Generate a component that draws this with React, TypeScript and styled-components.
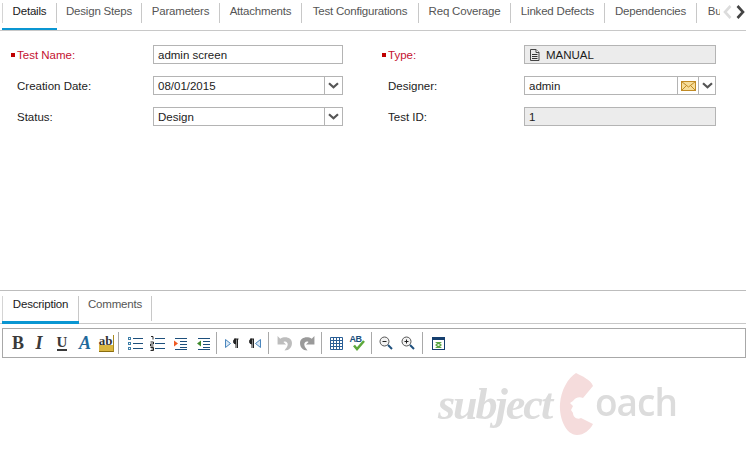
import React from "react";
import styled, { createGlobalStyle } from "styled-components";

const GlobalStyle = createGlobalStyle`
  html, body {
    margin: 0;
    padding: 0;
    background: #fff;
  }
  * {
    box-sizing: border-box;
  }
`;

const Page = styled.div`
  position: relative;
  width: 746px;
  height: 456px;
  overflow: hidden;
  display: flex;
  flex-direction: column;
  font-family: "Liberation Sans", Arial, sans-serif;
  font-size: 11.5px;
  color: #222;
  background: #fff;
`;

// Tab strips
const TopTabBar = styled.div`
  display: flex;
  height: 31px;
  padding: 3px 0 0 2px;
  border-bottom: 1px solid #c8c8c8;
`;

const TabScroller = styled.div`
  display: flex;
  width: 718px;
  overflow: hidden;
  flex: none;
`;

const Tab = styled.div<{ $width: number; $active?: boolean; $height: number }>`
  flex: none;
  width: ${(p) => p.$width}px;
  height: ${(p) => p.$height}px;
  border-bottom: 3px solid ${(p) => (p.$active ? "#0a96d2" : "transparent")};
  position: relative;
  z-index: 1;
`;

const TabLabel = styled.div<{ $active?: boolean; $first?: boolean; $height: number; $lift: number }>`
  height: ${(p) => p.$height}px;
  display: flex;
  justify-content: center;
  padding-bottom: ${(p) => p.$lift}px;
  align-items: center;
  white-space: nowrap;
  letter-spacing: -0.2px;
  color: ${(p) => (p.$active ? "#1a1a1a" : "#555")};
  border-right: 1px solid #c8c8c8;
  border-left: ${(p) => (p.$first ? "1px solid #d4d4d4" : "none")};
`;

const ScrollArrows = styled.div`
  flex: none;
  display: flex;
  align-items: center;
  height: 18px;
  margin-left: 3px;
  gap: 4px;
`;

// Form
const UpperPanel = styled.div`
  height: 259px;
  padding: 14px 0 0 11px;
`;

const FormGrid = styled.div`
  display: grid;
  grid-template-columns: 142px 190px 181px 192px;
  row-gap: 12px;
  grid-auto-rows: 19px;
`;

const FieldLabel = styled.div<{ $required?: boolean; $second?: boolean }>`
  display: flex;
  align-items: center;
  color: ${(p) => (p.$required ? "#c4122f" : "#222")};
  padding-left: ${(p) => (p.$required ? 0 : 6)}px;
  margin-left: ${(p) => (p.$second ? 39 : 0)}px;
`;

const RequiredMark = styled.span`
  width: 4px;
  height: 4px;
  background: #c00000;
  margin-right: 2px;
  flex: none;
`;

const Field = styled.div<{ $readOnly?: boolean }>`
  display: flex;
  align-items: stretch;
  height: 19px;
  border: 1px solid #b4b4b4;
  background: ${(p) => (p.$readOnly ? "#ececec" : "#fff")};
`;

const FieldValue = styled.div`
  flex: 1;
  display: flex;
  align-items: center;
  gap: 6px;
  padding-left: 4px;
  color: #1c1c1c;
`;

const FieldButton = styled.div<{ $width: number }>`
  flex: none;
  width: ${(p) => p.$width}px;
  display: flex;
  align-items: center;
  justify-content: center;
  border-left: 1px solid #b4b4b4;
`;

// Lower panel
const LowerPanel = styled.div`
  flex: 1;
  border-top: 1px solid #bdbdbd;
`;

const LowerTabBar = styled.div`
  display: flex;
  height: 33px;
  padding: 5px 0 0 2px;
  border-bottom: 1px solid #c8c8c8;
`;

const Toolbar = styled.div`
  display: flex;
  align-items: center;
  height: 30px;
  width: 744px;
  margin: 4px 0 0 2px;
  padding-left: 5px;
  border: 1px solid #a8a8a8;
`;

const ToolButton = styled.div<{ $width: number }>`
  flex: none;
  width: ${(p) => p.$width}px;
  height: 20px;
  display: flex;
  align-items: center;
  justify-content: center;
  font-family: "Liberation Serif", serif;
  font-weight: 700;
  font-size: 17px;
  line-height: 1;
`;

const ToolSeparator = styled.div`
  flex: none;
  width: 1px;
  height: 22px;
  margin: 0 5px 0 2px;
  background: #a9a9a9;
`;

const Glyph = styled.span<{ $color?: string; $italic?: boolean; $underline?: boolean; $size?: number }>`
  color: ${(p) => p.$color ?? "#3a3a3a"};
  font-style: ${(p) => (p.$italic ? "italic" : "normal")};
  font-size: ${(p) => p.$size ?? 18}px;
  border-bottom: ${(p) => (p.$underline ? "2px solid #3a3a3a" : "none")};
  line-height: ${(p) => (p.$underline ? "13px" : 1)};
`;

const HighlightGlyph = styled.span`
  display: block;
  width: 15px;
  height: 17px;
  font-size: 13px;
  line-height: 12px;
  text-align: center;
  color: #333;
  background: linear-gradient(#fff 0 62%, #d9b640 62%);
  border-bottom: 1px solid #8a6d10;
  border-right: 1px solid #a98a20;
`;

// Watermark, sits over the empty editor
const Watermark = styled.div`
  position: absolute;
  left: 438px;
  top: 371px;
  display: flex;
  align-items: center;
  filter: blur(0.5px);
  color: #dcdcdc;
  white-space: nowrap;
`;

const WatermarkScript = styled.span`
  font-family: "Liberation Serif", serif;
  font-style: italic;
  font-weight: 700;
  font-size: 44px;
  line-height: 64px;
  letter-spacing: -2px;
  width: 120px;
  margin-top: 2px;
`;

const WatermarkPlain = styled.span`
  font-family: "Open Sans", "Liberation Sans", sans-serif;
  font-weight: 600;
  font-size: 37px;
  line-height: 64px;
  letter-spacing: -1px;
  margin-left: -1px;
  margin-top: -4px;
`;

const Chevron = () => (
  <svg width="11" height="7" viewBox="0 0 11 7">
    <path d="M1 1.200 5.500 5.200 10 1.200" fill="none" stroke="#555" strokeWidth="2.200" />
  </svg>
);

const ArrowIcon = ({ left, color }: { left?: boolean; color: string }) => (
  <svg width="9" height="14" viewBox="0 0 9 14">
    <path d={left ? "M7.500 1 2 7l5.500 6" : "M1.500 1 7 7l-5.500 6"} fill="none" stroke={color} strokeWidth="2.600" />
  </svg>
);

const DocIcon = () => (
  <svg width="11" height="12" viewBox="0 0 11 12">
    <path d="M1.500.5h5.500l3 3v8h-8.500z" fill="#e8e8e8" stroke="#444" />
    <path d="M7 .5v3h3" fill="#fff" stroke="#444" />
    <path d="M3 5.500h5.500M3 7.500h5.500M3 9.500h5.500" stroke="#333" />
  </svg>
);

const MailIcon = () => (
  <svg width="15" height="10" viewBox="0 0 15 10">
    <rect x=".5" y=".5" width="14" height="9" fill="#f6dd9a" stroke="#c08a24" />
    <path d="M.5.500 7.500 6l7-5.500M.5 9.500 5.500 4.500M14.500 9.500l-5-5" fill="none" stroke="#c08a24" />
  </svg>
);

const BulletListIcon = () => (
  <svg width="15" height="15" viewBox="0 0 15 15">
    <g fill="#fff" stroke="#3f7fa8">
      <rect x=".5" y="1.500" width="2" height="2" />
      <rect x=".5" y="6.500" width="2" height="2" />
      <rect x=".5" y="11.500" width="2" height="2" />
    </g>
    <path d="M5 2.500h10M5 7.500h10M5 12.500h10" stroke="#1d4f7c" />
  </svg>
);

const NumberListIcon = () => (
  <svg width="15" height="15" viewBox="0 0 15 15">
    <path d="M1 .5h2v3M.5 6h3v2h-3v2h3M.5 11.500h3v3h-3M1.500 13h2" fill="none" stroke="#111" strokeWidth=".9" />
    <path d="M5 2.500h10M5 7.500h10M5 12.500h10" stroke="#1d4f7c" />
  </svg>
);

const IndentIcon = ({ out }: { out?: boolean }) => (
  <svg width="13" height="13" viewBox="0 0 13 13">
    <path d="M1 1.500h12M6 4.500h7M6 7.500h7M6 10.500h7M1 12.500h12" stroke="#1d4f7c" />
    {out ? <path d="M0 6.500 4 3.500v6z" fill="#3f8a2e" /> : <path d="M4 6.500 0 3.500v6z" fill="#ef5a24" />}
  </svg>
);

const DirectionIcon = ({ rtl }: { rtl?: boolean }) => (
  <svg width="14" height="11" viewBox="0 0 14 11">
    <path d={rtl ? "M13.500 1.500v8L8.500 5.500z" : "M.5 1.500v8l5-4z"} fill="#dbe9f6" stroke="#4a86bd" />
    <path
      d={rtl ? "M3 1h4M5 1v9M6.500 1v9M5 1a2.300 2.300 0 0 0 0 5" : "M9 1h4.500M11 1v9M12.500 1v9M11 1a2.300 2.300 0 0 0 0 5"}
      fill="#222"
      stroke="#222"
    />
  </svg>
);

const UndoIcon = ({ redo }: { redo?: boolean }) => (
  <svg width="17" height="16" viewBox="0 0 15 15">
    <g transform={redo ? "translate(15 0) scale(-1 1)" : undefined}>
      <path
        d="M1 1v8h8L6.500 6.500C9 5.500 10.500 7 10.500 9c0 2-1.500 3.500-3 5.500 4.500 0 7-3 7-7C14.500 2.500 8 .5 3.500 3.500z"
        fill={redo ? "#9a9a9a" : "#bdbdbd"}
      />
    </g>
  </svg>
);

const TableIcon = () => (
  <svg width="13" height="13" viewBox="0 0 13 13">
    <path d="M.5.500h12v12H.5zM.5 3.500h12M.5 6.500h12M.5 9.500h12M3.500.5v12M6.500.5v12M9.500.5v12" fill="#fff" stroke="#2a5f96" />
  </svg>
);

const SpellBox = styled.div`
  position: relative;
  width: 15px;
  height: 16px;
`;

const SpellLabel = styled.span`
  position: absolute;
  left: 0;
  top: 0;
  font-family: "Liberation Sans", sans-serif;
  font-size: 9px;
  font-weight: 700;
  letter-spacing: -0.4px;
  line-height: 9px;
  color: #1d4f7c;
`;

const SpellIcon = () => (
  <SpellBox>
    <SpellLabel>AB</SpellLabel>
    <svg width="15" height="16" viewBox="0 0 15 16">
      <path d="M4 10.500 7 14l7-8" fill="none" stroke="#5da83a" strokeWidth="2.500" />
    </svg>
  </SpellBox>
);

const ZoomIcon = ({ plus }: { plus?: boolean }) => (
  <svg width="14" height="14" viewBox="0 0 14 14">
    <circle cx="5.500" cy="5.500" r="4.500" fill="#f2f2f2" stroke="#555" />
    <path d="M3.500 5.500h4" stroke="#222" />
    {plus && <path d="M5.500 3.500v4" stroke="#222" />}
    <path d="M9 9l4 4" stroke="#1d4f7c" strokeWidth="2" />
  </svg>
);

const PreviewIcon = () => (
  <svg width="13" height="13" viewBox="0 0 13 13">
    <rect x=".5" y=".5" width="12" height="12" fill="#fff" stroke="#153f6e" />
    <rect x="0" y="0" width="13" height="3" fill="#153f6e" />
    <rect x="3" y="5" width="7" height="6" fill="#5aa544" />
    <path d="M3 5l2 1.500L3 8zM10 5 8 6.500 10 8zM3 11l2-1.500L3 8zM10 11 8 9.500 10 8z" fill="#fff" />
    <rect x="5.500" y="7" width="2" height="2" fill="#d8ecd0" />
  </svg>
);

const LogoMark = () => (
  <svg width="38" height="64" viewBox="0 0 38 64">
    <path
      d="M18 1C24 4 33 8 35 14L25 26C21 24 17 26 15 29L12 31 15 34 13 38 15 41C15 45 19 48 23 46L35 52C32 58 26 63 19 63 8 63 1 46 2 32 3 18 10 6 18 1z"
      fill="#f5dcdc"
    />
  </svg>
);

const topTabs = [
  { label: "Details", width: 55 },
  { label: "Design Steps", width: 85 },
  { label: "Parameters", width: 78 },
  { label: "Attachments", width: 82 },
  { label: "Test Configurations", width: 117 },
  { label: "Req Coverage", width: 92 },
  { label: "Linked Defects", width: 94 },
  { label: "Dependencies", width: 92 },
  { label: "Bu", width: 36 },
];

const lowerTabs = [
  { label: "Description", width: 77 },
  { label: "Comments", width: 73 },
];

const App = () => (
  <Page>
    <GlobalStyle />
    <TopTabBar>
      <TabScroller>
        {topTabs.map((tab, i) => (
          <Tab key={tab.label} $width={tab.width} $height={28} $active={i === 0}>
            <TabLabel $active={i === 0} $first={i === 0} $height={20} $lift={5}>
              {tab.label}
            </TabLabel>
          </Tab>
        ))}
      </TabScroller>
      <ScrollArrows>
        <ArrowIcon left color="#dcdcdc" />
        <ArrowIcon color="#444" />
      </ScrollArrows>
    </TopTabBar>

    <UpperPanel>
      <FormGrid>
        <FieldLabel $required>
          <RequiredMark />
          Test Name:
        </FieldLabel>
        <Field>
          <FieldValue>admin screen</FieldValue>
        </Field>
        <FieldLabel $required $second>
          <RequiredMark />
          Type:
        </FieldLabel>
        <Field $readOnly>
          <FieldValue>
            <DocIcon />
            MANUAL
          </FieldValue>
        </Field>

        <FieldLabel>Creation Date:</FieldLabel>
        <Field>
          <FieldValue>08/01/2015</FieldValue>
          <FieldButton $width={18}>
            <Chevron />
          </FieldButton>
        </Field>
        <FieldLabel $second>Designer:</FieldLabel>
        <Field>
          <FieldValue>admin</FieldValue>
          <FieldButton $width={21}>
            <MailIcon />
          </FieldButton>
          <FieldButton $width={17}>
            <Chevron />
          </FieldButton>
        </Field>

        <FieldLabel>Status:</FieldLabel>
        <Field>
          <FieldValue>Design</FieldValue>
          <FieldButton $width={18}>
            <Chevron />
          </FieldButton>
        </Field>
        <FieldLabel $second>Test ID:</FieldLabel>
        <Field $readOnly>
          <FieldValue>1</FieldValue>
        </Field>
      </FormGrid>
    </UpperPanel>

    <LowerPanel>
      <LowerTabBar>
        {lowerTabs.map((tab, i) => (
          <Tab key={tab.label} $width={tab.width} $height={28} $active={i === 0}>
            <TabLabel $active={i === 0} $first={i === 0} $height={25} $lift={9}>
              {tab.label}
            </TabLabel>
          </Tab>
        ))}
      </LowerTabBar>

      <Toolbar>
        <ToolButton $width={20}><Glyph>B</Glyph></ToolButton>
        <ToolButton $width={22}><Glyph $italic>I</Glyph></ToolButton>
        <ToolButton $width={24}><Glyph $underline $size={15}>U</Glyph></ToolButton>
        <ToolButton $width={22}><Glyph $color="#1f6a9c" $italic>A</Glyph></ToolButton>
        <ToolButton $width={20}><HighlightGlyph>ab</HighlightGlyph></ToolButton>
        <ToolSeparator />
        <ToolButton $width={22}><BulletListIcon /></ToolButton>
        <ToolButton $width={22}><NumberListIcon /></ToolButton>
        <ToolButton $width={24}><IndentIcon /></ToolButton>
        <ToolButton $width={22}><IndentIcon out /></ToolButton>
        <ToolSeparator />
        <ToolButton $width={20}><DirectionIcon /></ToolButton>
        <ToolButton $width={24}><DirectionIcon rtl /></ToolButton>
        <ToolSeparator />
        <ToolButton $width={21}><UndoIcon /></ToolButton>
        <ToolButton $width={24}><UndoIcon redo /></ToolButton>
        <ToolSeparator />
        <ToolButton $width={18}><TableIcon /></ToolButton>
        <ToolButton $width={24}><SpellIcon /></ToolButton>
        <ToolSeparator />
        <ToolButton $width={18}><ZoomIcon /></ToolButton>
        <ToolButton $width={25}><ZoomIcon plus /></ToolButton>
        <ToolSeparator />
        <ToolButton $width={20}><PreviewIcon /></ToolButton>
      </Toolbar>
    </LowerPanel>

    <Watermark>
      <WatermarkScript>subject</WatermarkScript>
      <LogoMark />
      <WatermarkPlain>oach</WatermarkPlain>
    </Watermark>
  </Page>
);

export default App;
